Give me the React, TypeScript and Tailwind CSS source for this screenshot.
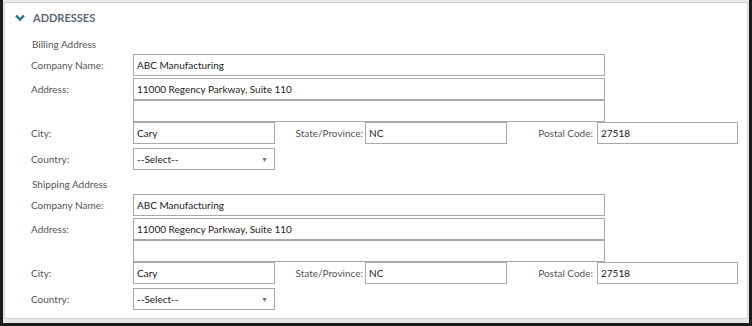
import React from 'react';

const font = { fontFamily: 'Lato, "Open Sans", Arial, sans-serif' };

const Field: React.FC<{ value?: string; className?: string }> = ({ value = '', className = 'w-[472px]' }) => (
  <div className={`${className} h-[22px] border border-[#a9a9a9] bg-white px-[3px] flex items-center text-[10px] text-[#222]`}>
    {value}
  </div>
);

const Row: React.FC<{ label: string; children: React.ReactNode }> = ({ label, children }) => (
  <div className="flex">
    <div className="w-[102px] h-[22px] flex items-center text-[10px] text-[#555]">{label}</div>
    <div className="flex flex-col">{children}</div>
  </div>
);

const AddressBlock: React.FC<{ title: string }> = ({ title }) => (
  <div className="flex flex-col">
    <div className="h-[20px] flex items-center text-[10px] text-[#555] pl-[1px]">{title}</div>
    <div className="flex flex-col">
      <Row label="Company Name:">
        <Field value="ABC Manufacturing" />
      </Row>
      <div className="mt-[2px]">
        <Row label="Address:">
          <Field value="11000 Regency Parkway, Suite 110" />
          <Field />
        </Row>
      </div>
      <Row label="City:">
        <div className="flex items-center">
          <Field value="Cary" className="w-[142px]" />
          <div className="w-[90px] pr-[2px] text-right text-[10px] text-[#555]">State/Province:</div>
          <Field value="NC" className="w-[142px]" />
          <div className="w-[90px] pr-[4px] text-right text-[10px] text-[#555]">Postal Code:</div>
          <Field value="27518" className="w-[141px]" />
        </div>
      </Row>
      <div className="mt-[4px]">
        <Row label="Country:">
          <div className="w-[142px] h-[22px] border border-[#a9a9a9] bg-white pl-[3px] pr-[6px] flex items-center justify-between text-[10px] text-[#222]">
            <span>--Select--</span>
            <span className="text-[7px] text-[#777]">▼</span>
          </div>
        </Row>
      </div>
    </div>
  </div>
);

export default function App() {
  return (
    <div style={font} className="w-[752px] h-[326px] bg-[#e8e8e8] border-l-[3px] border-r-[3px] border-b-[3px] border-[#1c1c1c] pt-[2px] px-[1px] pb-[4px]">
      <div className="h-full bg-white border border-[#d4d4d4] pl-[26px]">
        <div className="h-[26px] mt-[2px] -ml-[16px] flex items-center gap-[8px]">
          <svg width="10" height="8" viewBox="0 0 10 8">
            <path d="M1 1.5 L5 5.5 L9 1.5" stroke="#1f6d8c" strokeWidth="2.4" fill="none" />
          </svg>
          <span className="text-[11px] font-bold text-[#5c6773]">ADDRESSES</span>
        </div>
        <div className="mt-[3px] flex flex-col gap-[4px]">
          <AddressBlock title="Billing Address" />
          <AddressBlock title="Shipping Address" />
        </div>
      </div>
    </div>
  );
}
